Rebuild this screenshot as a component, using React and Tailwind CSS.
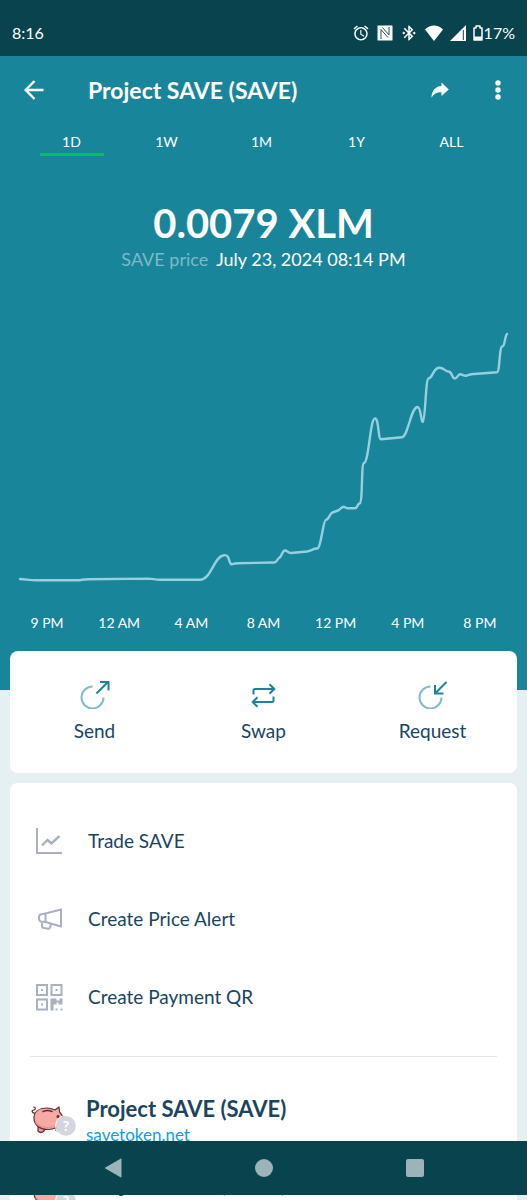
import { useState } from 'react';
import { MdAlarm, MdBluetoothConnected } from 'react-icons/md';

const RANGES = ['1D', '1W', '1M', '1Y', 'ALL'];
const HOURS = ['9 PM', '12 AM', '4 AM', '8 AM', '12 PM', '4 PM', '8 PM'];

const NfcIcon = () => (
  <svg viewBox="0 0 16 16" className="h-4 w-4" aria-hidden="true">
    <rect x="0.5" y="0.5" width="15" height="15" rx="0.5" fill="#fff" />
    <path d="M4 14V4.500L11 12.500M5.500 2.500L12 10V2" fill="none" stroke="#09434d" strokeWidth="0.9" />
  </svg>
);

const WifiIcon = () => (
  <svg viewBox="0 0 20 16" className="h-4 w-[18px]" preserveAspectRatio="none" aria-hidden="true">
    <path d="M10 16L0 4.400C3 2 6.300 0.500 10 0.500s7 1.500 10 3.900z" fill="#fff" />
  </svg>
);

const SignalIcon = () => (
  <svg viewBox="0 0 16 16" className="h-4 w-4" aria-hidden="true">
    <path d="M0 16L16 0v16z" fill="#fff" />
    <path d="M13.300 5v10" stroke="#09434d" strokeWidth="1" />
  </svg>
);

const BatteryIcon = () => (
  <svg viewBox="0 0 10 16" className="h-4 w-[10px]" aria-hidden="true">
    <path d="M3 1h4v2h2v12H1V3h2z" fill="none" stroke="#fff" strokeWidth="1.500" strokeLinejoin="round" />
    <path d="M1 11.500h8V15H1z" fill="#fff" />
  </svg>
);

const BackIcon = () => (
  <svg viewBox="0 0 20 20" className="h-5 w-5" fill="none" stroke="#fff" strokeWidth="2.400" aria-hidden="true">
    <path d="M19.500 10H2M10.500 1L1.700 10l8.800 9" />
  </svg>
);

const ShareIcon = () => (
  <svg viewBox="0 0 18 16" className="h-4 w-[18px]" fill="#fff" aria-hidden="true">
    <path d="M10.500 0.500L17.800 7.500L10.500 14V10.300C5.500 10 2.500 12 0.500 15.800C0.500 9 4 4.500 10.500 4z" />
  </svg>
);

const MoreIcon = () => (
  <svg viewBox="0 0 6 20" className="h-5 w-[6px]" fill="#fff" aria-hidden="true">
    <circle cx="3" cy="3" r="2.700" />
    <circle cx="3" cy="10" r="2.700" />
    <circle cx="3" cy="17" r="2.700" />
  </svg>
);

const SendIcon = () => (
  <svg viewBox="0 0 30 30" className="h-[30px] w-[30px]" fill="none" aria-hidden="true">
    <path d="M12.500 7.500A11 11 0 1 0 23.500 18.500" stroke="#19859a" strokeOpacity="0.55" strokeWidth="2" />
    <path d="M16.500 14.500L28 3M20 3h8.500v8.500" stroke="#19859a" strokeWidth="2" />
  </svg>
);

const SwapIcon = () => (
  <svg viewBox="0 0 30 30" className="h-[30px] w-[30px]" fill="none" stroke="#19859a" strokeWidth="2" aria-hidden="true">
    <path d="M4.500 15.500V11.500q0-1.500 1.500-1.500H25M20.500 5.200L25.300 10l-4.800 4.800" />
    <path d="M24.500 17.500v4q0 1.500-1.500 1.500H4M8.500 18.200L3.700 23l4.800 4.800" />
  </svg>
);

const RequestIcon = () => (
  <svg viewBox="0 0 30 30" className="h-[30px] w-[30px]" fill="none" aria-hidden="true">
    <path d="M12.500 7.500A11 11 0 1 0 23.500 18.500" stroke="#19859a" strokeOpacity="0.55" strokeWidth="2" />
    <path d="M28.500 3L17 14.500M17 6v8.500h8.500" stroke="#19859a" strokeWidth="2" />
  </svg>
);

const TradeIcon = () => (
  <svg viewBox="0 0 28 28" className="h-7 w-7" fill="none" stroke="#a9b0bf" strokeWidth="2" aria-hidden="true">
    <path d="M2 1v25h25" />
    <path d="M7 18.500l5.500-5.500 4 3.500 8-7.500" strokeWidth="2.400" />
  </svg>
);

const AlertIcon = () => (
  <svg viewBox="0 0 28 28" className="h-7 w-7" fill="none" stroke="#a9b0bf" strokeWidth="2" strokeLinejoin="round" aria-hidden="true">
    <path d="M10.500 8.500L26 4.500v17L10.500 17z" />
    <path d="M10.500 8.500L5.500 9.500q-1.500 0.500-1.500 3.200T5.500 16.500l5 0.500" />
    <path d="M7 17.500v4q0 1 1 1.200l5 1q1.500 0.200 2-1l1-4" />
  </svg>
);

const QrIcon = () => (
  <svg viewBox="0 0 28 28" className="h-7 w-7" fill="#a9b0bf" aria-hidden="true">
    <g fill="none" stroke="#a9b0bf" strokeWidth="2">
      <path d="M2 2h10v10H2zM16.500 2h10v10h-10zM2 16.500h10v10H2z" />
    </g>
    <path d="M6 6h2v2H6zM20.500 6h2v2h-2zM6 20.500h2v2H6z" />
    <path d="M15.500 15.500h6v2h3v-2h3v6h-4v-2h-2v2h-3v6h-3zM20.500 25.500h2v2h-2zM25.500 25.500h2v2h-2z" />
  </svg>
);

const PigIcon = () => (
  <svg viewBox="0 0 36 30" className="h-[30px] w-9" stroke="#5f2f3c" strokeWidth="1.200" strokeLinejoin="round" strokeLinecap="round" aria-hidden="true">
    <path d="M7 20v6q3 3 6 0l1-2zM25 21v4.500q3 1.500 4-1l1-4z" fill="#ef9a93" />
    <path d="M5 8C1 9 0 5 2.500 5S5 2 2.500 2" fill="none" />
    <path d="M3 13C3 6 9 3 16 3c4 0 6 1 8 2l4-3 0.500 5q2 2 3 4.500l2 0.500v5l-3 0.500C28 22 24 24.500 17 24.500S3 21 3 13z" fill="#f7aaa3" />
    <path d="M12 6.500q5-2 9 0" fill="none" strokeWidth="1.600" />
    <path d="M5 18q4 4.500 11 4.500t12-3" fill="none" stroke="#ee8f8b" />
    <circle cx="27" cy="11.500" r="0.9" fill="#5f2f3c" />
  </svg>
);

const PriceChart = () => (
  <svg viewBox="0 0 527 270" className="block w-full" role="img" aria-label="SAVE price chart">
    <path
      d="M20 259C26 259 28 260.300 36 260.300H76C82 260.300 82 259.300 88 259.200L148 258.600C154 258.800 154 259.700 160 259.700H200C211 259.700 214 237 223 235.500C230 233 228.500 244 231.500 244.300C234 244 233 243.300 238 243.200L274 242.500C277 242.500 277 239 279 238C282 237 282 230.500 285 230.500C287 230.500 288 233 291 233L307 231.500C312 230.500 313 228.500 317 228.500C321 229 323 200 326 199.800C329 199.500 330 193 332.500 192.500L338 190.500C340 190 341 187 343.500 186.700C345 186.700 345.500 188.500 349 188.300H355C358 188 357 184 359.500 183.500C363 183 361 143.500 364 143C369 142 370 98.500 375 98.500C379 98.500 378 119.500 381 119.300L402 117.200C408 116.500 411 87 417.500 87C421 87 421 102 422.700 102C425.500 101 425.500 59 428.500 58.500C433 58 433 48 439 47.700C444 47.500 445 51.500 449 51.800C452 52 452 58.500 455 58.500C457 58.500 458 54.300 460 54.300C463 54.300 464 56.500 467 55.500C470 54.200 471 54.200 474 54L497 52.300C500 52 499 26.500 502.500 26.300C505 26 504.500 17 507 14"
      fill="none"
      stroke="#96d0de"
      strokeWidth="2.400"
      strokeLinecap="round"
    />
  </svg>
);

const ACTIONS = [
  { label: 'Send', Icon: SendIcon },
  { label: 'Swap', Icon: SwapIcon },
  { label: 'Request', Icon: RequestIcon },
];

const MENU = [
  { label: 'Trade SAVE', Icon: TradeIcon },
  { label: 'Create Price Alert', Icon: AlertIcon },
  { label: 'Create Payment QR', Icon: QrIcon },
];

const AssetRow = () => (
  <div className="flex h-[75px] items-start pl-[21px]">
    <div className="relative mt-[10px] w-[55px]">
      <PigIcon />
      <span className="absolute top-[11px] left-[25px] flex h-5 w-5 items-center justify-center rounded-full bg-[#d3d6de] text-sm font-bold text-white outline-1 outline-white">
        ?
      </span>
    </div>
    <div className="flex flex-col items-start">
      <h2 className="text-[22px] leading-7 font-bold">Project SAVE (SAVE)</h2>
      <a href="#savetoken" className="text-[17px] leading-6 text-[#0d9ee8]">savetoken.net</a>
    </div>
  </div>
);

export default function App() {
  const [range, setRange] = useState('1D');

  return (
    <div className="relative h-screen overflow-hidden bg-[#e6f0f3] font-['Lato',sans-serif] text-[#1a4561]">
      <div className="flex h-14 items-center justify-between bg-[#09434d] px-3 pt-[10px] text-base text-white">
        <span>8:16</span>
        <div className="flex items-center gap-[7px]">
          <MdAlarm className="h-[18px] w-[18px]" />
          <NfcIcon />
          <MdBluetoothConnected className="h-[18px] w-[18px]" />
          <WifiIcon />
          <SignalIcon />
          <div className="flex items-center gap-px">
            <BatteryIcon />
            <span>17%</span>
          </div>
        </div>
      </div>

      <header className="bg-[#19859a] pb-[55px] text-white">
        <div className="flex h-[68px] items-center pr-[26px] pl-6">
          <button type="button" aria-label="Back">
            <BackIcon />
          </button>
          <h1 className="ml-11 flex-1 text-[23px] font-bold">Project SAVE (SAVE)</h1>
          <button type="button" aria-label="Share" className="mr-[46px]">
            <ShareIcon />
          </button>
          <button type="button" aria-label="More">
            <MoreIcon />
          </button>
        </div>

        <nav className="grid grid-cols-5 justify-items-center pr-7 pl-6">
          {RANGES.map((item) => (
            <button
              key={item}
              type="button"
              onClick={() => setRange(item)}
              className={`w-16 border-b-[3px] pt-[7px] text-sm leading-[22px] ${range === item ? 'border-[#0fb96b]' : 'border-transparent'}`}
            >
              {item}
            </button>
          ))}
        </nav>

        <div className="mt-[43px] text-center">
          <div className="text-[40px] leading-12 font-bold">0.0079 XLM</div>
          <div className="text-lg leading-6">
            <span className="mr-2 text-[#7cbac7]">SAVE price</span>
            <span>July 23, 2024 08:14 PM</span>
          </div>
        </div>

        <div className="mt-[49px]">
          <PriceChart />
        </div>
        <div className="mt-[21px] grid grid-cols-7 px-[11px] text-center text-sm leading-6">
          {HOURS.map((hour) => (
            <span key={hour}>{hour}</span>
          ))}
        </div>
      </header>

      <main className="relative -mt-[39px] px-[10px]">
        <section className="grid h-[122px] grid-cols-3 rounded-lg bg-white">
          {ACTIONS.map(({ label, Icon }) => (
            <button key={label} type="button" className="flex flex-col items-center pt-7 text-[19px]">
              <Icon />
              <span className="mt-2 leading-7">{label}</span>
            </button>
          ))}
        </section>

        <section className="mt-[10px] rounded-t-lg bg-white pt-[19px]">
          {MENU.map(({ label, Icon }) => (
            <button key={label} type="button" className="flex h-[78px] w-full items-center pl-[25px] text-[19px]">
              <Icon />
              <span className="ml-[25px]">{label}</span>
            </button>
          ))}
          <hr className="mx-5 mt-5 mb-[38px] border-[#e3e8ee]" />
          <AssetRow />
          <AssetRow />
        </section>
      </main>

      <nav className="fixed inset-x-0 bottom-[5px] flex h-[54px] items-center justify-center gap-[133px] bg-[#09434d]">
        <button type="button" aria-label="Navigate back">
          <svg viewBox="0 0 18 20" className="h-5 w-[18px]" fill="#9cb4b9" aria-hidden="true">
            <path d="M0.500 10L16.500 0.700q1-0.400 1 0.600v17.400q0 1-1 0.600z" />
          </svg>
        </button>
        <button type="button" aria-label="Home" className="h-[18px] w-[18px] rounded-full bg-[#9cb4b9]" />
        <button type="button" aria-label="Recent apps" className="h-[18px] w-[18px] rounded-xs bg-[#9cb4b9]" />
      </nav>
    </div>
  );
}
